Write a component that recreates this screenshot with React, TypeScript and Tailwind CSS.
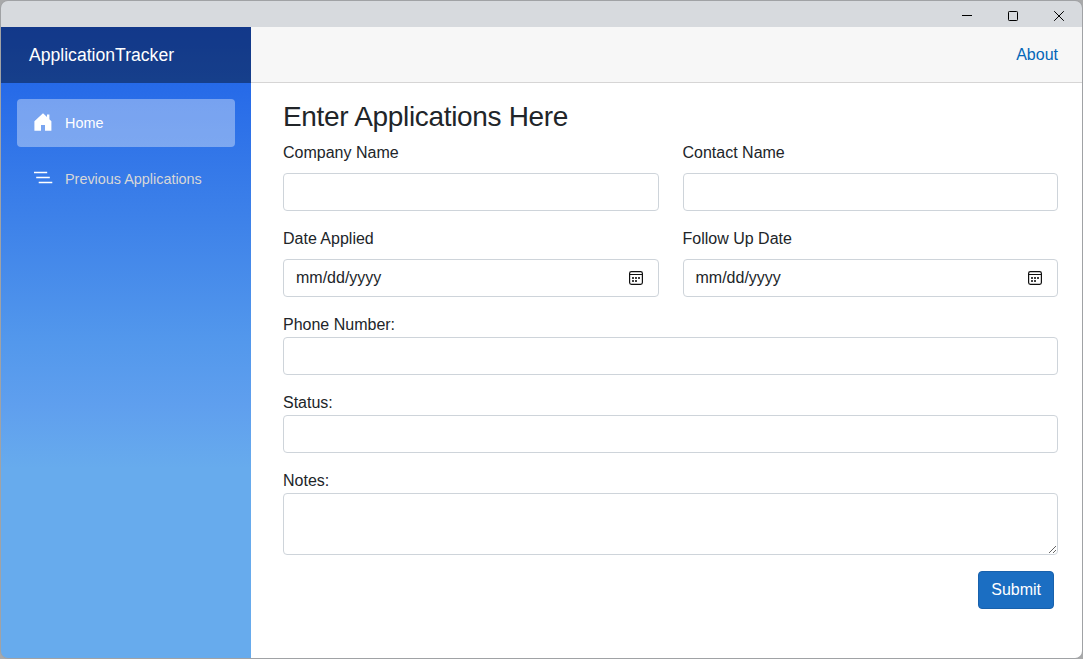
import React from "react";

const control =
  "flex h-[38px] w-full items-center rounded border border-[#ced4da] bg-white px-3 text-base leading-6 text-[#212529] outline-none";

function TitleBar() {
  return (
    <header className="flex h-[26px] shrink-0 items-start justify-end bg-[#d7dade] text-black">
      <button aria-label="Minimize" className="flex h-[29px] w-[46px] items-center justify-center">
        <svg width="12" height="12" viewBox="0 0 12 12" shapeRendering="crispEdges">
          <path d="M1 5h10v1H1z" fill="currentColor" />
        </svg>
      </button>
      <button aria-label="Maximize" className="flex h-[29px] w-[46px] items-center justify-center">
        <svg width="12" height="12" viewBox="0 0 12 12" fill="none" stroke="currentColor">
          <rect x="1.5" y="1.5" width="9" height="9" rx="0.8" />
        </svg>
      </button>
      <button aria-label="Close" className="flex h-[29px] w-[46px] items-center justify-center">
        <svg width="12" height="12" viewBox="0 0 12 12" fill="none" stroke="currentColor">
          <path d="M1.2 1.2l9.6 9.6M10.8 1.2l-9.6 9.6" />
        </svg>
      </button>
    </header>
  );
}

function Sidebar() {
  return (
    <aside className="w-[250px] shrink-0 bg-[linear-gradient(180deg,#1f5ee6_0%,#266ae8_9%,#3e82e9_31%,#5398ec_50%,#5f9fee_60%,#67abed_70%)]">
      <div className="flex h-14 items-center bg-black/40 pl-7 text-[17.6px] text-white">ApplicationTracker</div>
      <nav className="flex flex-col gap-2 p-4 text-[14.4px]">
        <a href="#" className="flex h-12 items-center rounded bg-white/37 pl-4 text-white">
          <svg className="mr-3 -mt-0.5" width="20" height="20" viewBox="0 0 20 20" fill="currentColor">
            <path d="M10 1.2L1.4 9.2V18.8H8V13h4v5.8h6.4V9.2L16.4 7.3V2.5H14v2.6L10 1.2z" />
          </svg>
          Home
        </a>
        <a href="#" className="flex h-12 items-center pl-4 text-[#d7d7d7]">
          <svg className="mr-3 -mt-0.5" width="20" height="20" viewBox="0 0 20 20" fill="white">
            <path d="M1 3.7h13.2v1.5H1zM3.2 8.8h13.6v1.5H3.2zM5.7 13.8h13.6v1.5H5.7z" />
          </svg>
          Previous Applications
        </a>
      </nav>
    </aside>
  );
}

function CalendarIcon() {
  return (
    <svg width="16" height="16" viewBox="0 0 16 16" fill="none">
      <rect x="1.6" y="1.6" width="12.8" height="12.8" rx="1.8" stroke="#101010" strokeWidth="1.2" />
      <path d="M1.5 4.5h13" stroke="#101010" strokeWidth="1" />
      <path d="M4 7h2v2H4zM7 7h2v2H7zM10 7h2v2h-2zM4 10h2v2H4zM7 10h2v2H7z" fill="#404040" />
    </svg>
  );
}

function DateControl() {
  return (
    <div className={control}>
      <span className="flex-1">mm/dd/yyyy</span>
      <button type="button" aria-label="Show date picker" className="mr-[2px]">
        <CalendarIcon />
      </button>
    </div>
  );
}

function ColumnField({ label, date = false }: { label: string; date?: boolean }) {
  return (
    <div>
      <label className="mb-2 block">{label}</label>
      {date ? <DateControl /> : <input type="text" className={control} />}
    </div>
  );
}

function WideField({ label }: { label: string }) {
  return (
    <label className="block">
      <span className="block">{label}</span>
      <input type="text" className={control} />
    </label>
  );
}

export default function App() {
  return (
    <div className="h-[659px] w-[1083px] overflow-hidden bg-[#a8a9aa] font-['Liberation_Sans',Arial,sans-serif] text-base leading-6 text-[#212529]">
      <div className="flex h-full w-full flex-col overflow-hidden rounded-lg border border-[#a0a2a5]">
        <TitleBar />
        <div className="flex min-h-0 flex-1">
          <Sidebar />
          <main className="min-w-0 flex-1 bg-white">
            <div className="flex h-14 items-center justify-end border-b border-[#d6d5d5] bg-[#f7f7f7] pr-6">
              <a href="#" className="text-[#0366b8]">About</a>
            </div>
            <form className="pt-[17px] pr-6 pl-8" onSubmit={(e) => e.preventDefault()}>
              <h3 className="mb-[7px] text-[28px] leading-[34px] font-normal tracking-[-0.33px]">Enter Applications Here</h3>
              <div className="mb-4 grid grid-cols-2 gap-x-6 gap-y-4">
                <ColumnField label="Company Name" />
                <ColumnField label="Contact Name" />
                <ColumnField label="Date Applied" date />
                <ColumnField label="Follow Up Date" date />
              </div>
              <div className="flex flex-col gap-4">
                <WideField label="Phone Number:" />
                <WideField label="Status:" />
                <label className="block">
                  <span className="block">Notes:</span>
                  <textarea className="block h-[62px] w-full resize-y rounded border border-[#ced4da] bg-white px-3 py-1.5 outline-none" />
                </label>
              </div>
              <div className="mt-4 flex justify-end pr-1">
                <button className="h-[38px] rounded border border-[#1861ac] bg-[#1b6ec2] px-3 text-white">Submit</button>
              </div>
            </form>
          </main>
        </div>
      </div>
    </div>
  );
}
